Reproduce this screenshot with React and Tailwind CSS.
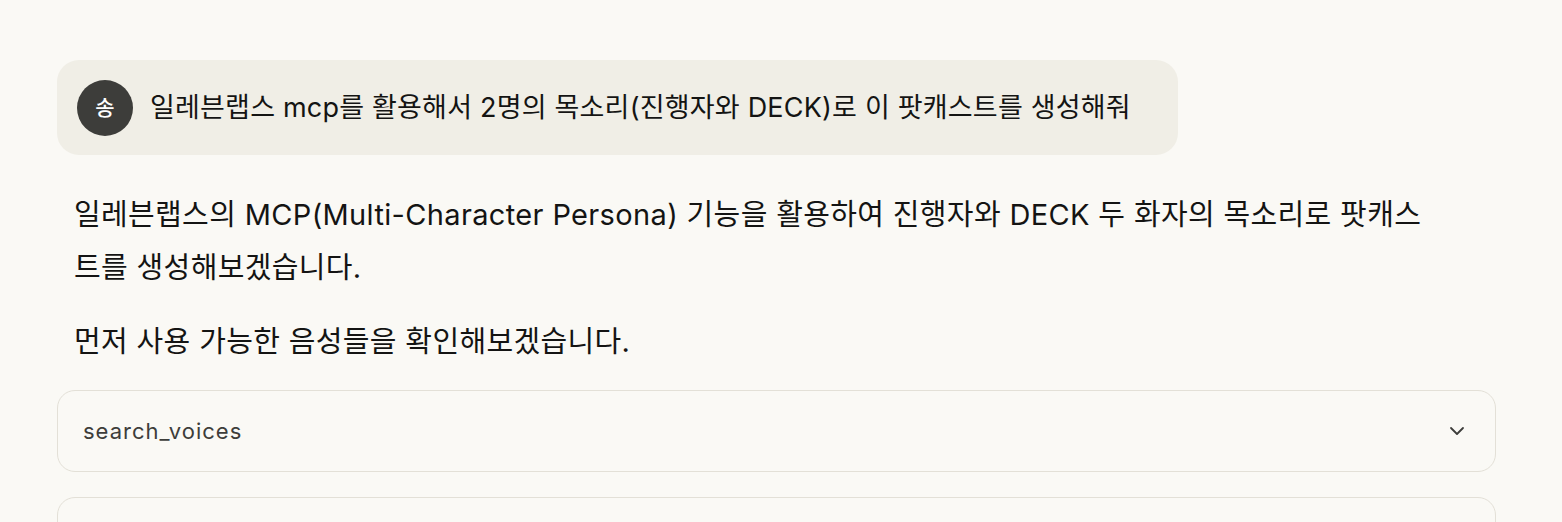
import { ChevronDown } from "lucide-react";

const FONT = { fontFamily: '"Inter", "Noto Sans CJK KR", sans-serif' };

export default function App() {
  return (
    <div className="min-h-[522px] w-full bg-[#faf9f5] text-[#141413]" style={FONT}>
      <div className="pl-[57px] pr-[66px] pt-[60px]">
        {/* user message */}
        <div className="flex w-[1121px] h-[95px] items-center gap-[17px] rounded-[22px] bg-[#f0eee6] pl-[20px]">
          <div className="flex h-[56px] w-[56px] shrink-0 items-center justify-center rounded-full bg-[#3d3d3a] text-[21px] font-medium text-white">
            송
          </div>
          <p className="text-[27px] leading-[36px] tracking-[0.2px]">
            일레븐랩스 mcp를 활용해서 2명의 목소리(진행자와 DECK)로 이 팟캐스트를 생성해줘
          </p>
        </div>

        {/* assistant reply */}
        <div className="mt-[33px] w-[1383px] pl-[17px] text-[29px] leading-[53px] tracking-[0.35px]">
          <p>
            일레븐랩스의 MCP(Multi-Character Persona) 기능을 활용하여 진행자와 DECK 두 화자의 목소리로 팟캐스트를 생성해보겠습니다.
          </p>
          <p className="mt-[21px]">먼저 사용 가능한 음성들을 확인해보겠습니다.</p>
        </div>

        {/* tool calls */}
        <div className="mt-[22px] flex flex-col gap-[25px]">
          <div className="flex h-[82px] items-center justify-between rounded-[18px] border border-[#e3e0d7] pl-[25px] pr-[26px]">
            <span className="text-[22px] tracking-[1px] text-[#3d3d3a]">search_voices</span>
            <ChevronDown className="h-[24px] w-[24px] text-[#3d3d3a]" strokeWidth={1.8} />
          </div>
          <div className="h-[82px] rounded-[18px] border border-[#e3e0d7]" />
        </div>
      </div>
    </div>
  );
}
